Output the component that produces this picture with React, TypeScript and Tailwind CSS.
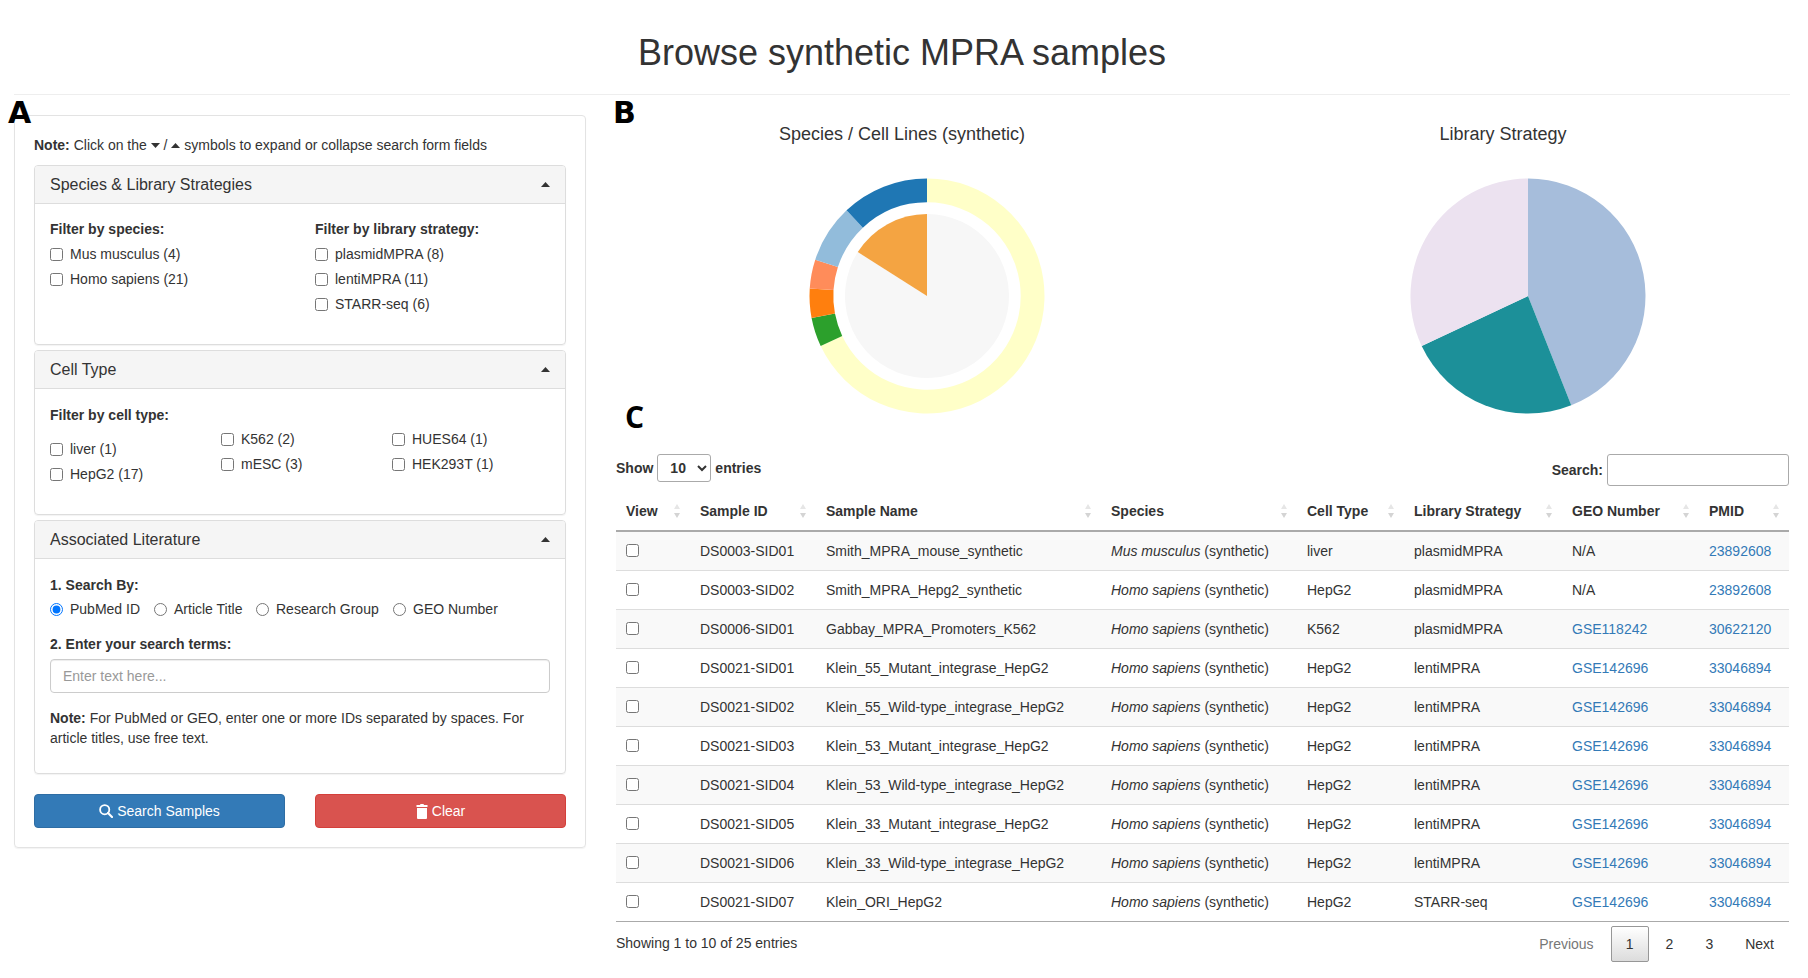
import React from 'react';

const rows = [
  ['DS0003-SID01', 'Smith_MPRA_mouse_synthetic', 'Mus musculus', 'liver', 'plasmidMPRA', 'N/A', '23892608'],
  ['DS0003-SID02', 'Smith_MPRA_Hepg2_synthetic', 'Homo sapiens', 'HepG2', 'plasmidMPRA', 'N/A', '23892608'],
  ['DS0006-SID01', 'Gabbay_MPRA_Promoters_K562', 'Homo sapiens', 'K562', 'plasmidMPRA', 'GSE118242', '30622120'],
  ['DS0021-SID01', 'Klein_55_Mutant_integrase_HepG2', 'Homo sapiens', 'HepG2', 'lentiMPRA', 'GSE142696', '33046894'],
  ['DS0021-SID02', 'Klein_55_Wild-type_integrase_HepG2', 'Homo sapiens', 'HepG2', 'lentiMPRA', 'GSE142696', '33046894'],
  ['DS0021-SID03', 'Klein_53_Mutant_integrase_HepG2', 'Homo sapiens', 'HepG2', 'lentiMPRA', 'GSE142696', '33046894'],
  ['DS0021-SID04', 'Klein_53_Wild-type_integrase_HepG2', 'Homo sapiens', 'HepG2', 'lentiMPRA', 'GSE142696', '33046894'],
  ['DS0021-SID05', 'Klein_33_Mutant_integrase_HepG2', 'Homo sapiens', 'HepG2', 'lentiMPRA', 'GSE142696', '33046894'],
  ['DS0021-SID06', 'Klein_33_Wild-type_integrase_HepG2', 'Homo sapiens', 'HepG2', 'lentiMPRA', 'GSE142696', '33046894'],
  ['DS0021-SID07', 'Klein_ORI_HepG2', 'Homo sapiens', 'HepG2', 'STARR-seq', 'GSE142696', '33046894'],
];

const columns = [
  { label: 'View', width: 'w-[74px]' },
  { label: 'Sample ID', width: 'w-[126px]' },
  { label: 'Sample Name', width: 'w-[285px]' },
  { label: 'Species', width: 'w-[196px]' },
  { label: 'Cell Type', width: 'w-[107px]' },
  { label: 'Library Strategy', width: 'w-[158px]' },
  { label: 'GEO Number', width: 'w-[137px]' },
  { label: 'PMID', width: 'w-[90px]' },
];

// angle 0 = top, clockwise, in degrees
const point = (r: number, deg: number) => {
  const a = (deg * Math.PI) / 180;
  return `${(r * Math.sin(a)).toFixed(2)} ${(-r * Math.cos(a)).toFixed(2)}`;
};

const slice = (r0: number, r1: number, from: number, to: number) => {
  const large = to - from > 180 ? 1 : 0;
  if (r0 === 0) {
    return `M0 0L${point(r1, from)}A${r1} ${r1} 0 ${large} 1 ${point(r1, to)}Z`;
  }
  return `M${point(r0, from)}L${point(r1, from)}A${r1} ${r1} 0 ${large} 1 ${point(r1, to)}L${point(r0, to)}A${r0} ${r0} 0 ${large} 0 ${point(r0, from)}Z`;
};

type Seg = { n: number; color: string };

const Ring = ({ r0, r1, segs }: { r0: number; r1: number; segs: Seg[] }) => {
  let at = 0;
  return (
    <>
      {segs.map((s, i) => {
        const from = at;
        at += (s.n / 25) * 360;
        return <path key={i} d={slice(r0, r1, from, at)} fill={s.color} />;
      })}
    </>
  );
};

const Chart = ({ title, children }: { title: string; children: React.ReactNode }) => (
  <div className="w-[572px]">
    <div className="h-[36px] pt-[1px] flex items-center justify-center text-[18px] text-[#333]">{title}</div>
    <svg className="mt-[25px] block" width="572" height="240" viewBox="-311 -120 572 240">
      {children}
    </svg>
  </div>
);

const Caret = ({ down }: { down?: boolean }) => (
  <svg width="9" height="5" viewBox="0 0 9 5" className="inline-block">
    <path d={down ? 'M0 0H9L4.5 5Z' : 'M4.5 0L9 5H0Z'} fill="#333" />
  </svg>
);

const Check = ({ label }: { label: string }) => (
  <label className="flex h-[25px] items-center gap-[7px] text-[#333]">
    <input type="checkbox" className="w-[13px] h-[13px] mt-[2px]" />
    {label}
  </label>
);

const Radio = ({ label, checked }: { label: string; checked?: boolean }) => (
  <label className="flex items-center gap-[7px]">
    <input type="radio" name="searchBy" defaultChecked={checked} className="w-[13px] h-[13px] mt-[1px]" />
    {label}
  </label>
);

const Accordion = ({ title, height, children }: { title: string; height: string; children: React.ReactNode }) => (
  <div className={`${height} border border-[#ddd] rounded-[4px] shadow-[0_1px_1px_rgba(0,0,0,0.05)] overflow-hidden`}>
    <div className="h-[38px] bg-[#f5f5f5] border-b border-[#ddd] flex items-center justify-between px-[15px] text-[16px]">
      <span>{title}</span>
      <Caret />
    </div>
    <div className="px-[15px] pt-[15px]">{children}</div>
  </div>
);

const SortIcon = () => (
  <svg width="8" height="16" viewBox="0 0 8 16" className="absolute right-[9px] top-[2px]">
    <path d="M4 1L7 6H1Z" fill="#e6e6e6" />
    <path d="M4 15L1 10H7Z" fill="#d4d4d4" />
  </svg>
);

const Tag = ({ children, className }: { children: string; className: string }) => (
  <div className={`absolute font-bold text-[30px] leading-none text-black ${className}`}>
    {children}
  </div>
);

export default function App() {
  return (
    <div className="relative w-[1808px] h-[978px] bg-white overflow-hidden font-['Liberation_Sans',Arial,sans-serif] text-[14px] leading-[20px] text-[#333]">
      <Tag className="left-[8px] top-[98px] font-['DejaVu_Sans',sans-serif]">A</Tag>
      <Tag className="left-[613px] top-[98px] font-['DejaVu_Sans',sans-serif]">B</Tag>
      <Tag className="left-[625px] top-[402px] font-['Open_Sans',sans-serif]">C</Tag>

      <div className="mx-[14px] w-[1776px] h-[95px] border-b border-[#eee] flex items-center justify-center">
        <h1 className="text-[36px] leading-[40px] pt-[11px]">Browse synthetic MPRA samples</h1>
      </div>

      <div className="flex items-start pt-[20px] pl-[14px]">
        {/* search form */}
        <div className="w-[572px] border border-[#e3e3e3] rounded-[4px] px-[19px] pt-[19px] pb-[19px] shadow-[0_1px_1px_rgba(0,0,0,0.05)]">
          <div className="flex items-center h-[20px] mb-[10px] whitespace-pre">
            <b>Note:</b> Click on the <Caret down /> / <Caret /> symbols to expand or collapse search form fields
          </div>

          <Accordion title="Species &amp; Library Strategies" height="h-[180px]">
            <div className="flex">
              <div className="w-[265px]">
                <div className="font-bold mb-[2px]">Filter by species:</div>
                <Check label="Mus musculus (4)" />
                <Check label="Homo sapiens (21)" />
              </div>
              <div>
                <div className="font-bold mb-[2px]">Filter by library strategy:</div>
                <Check label="plasmidMPRA (8)" />
                <Check label="lentiMPRA (11)" />
                <Check label="STARR-seq (6)" />
              </div>
            </div>
          </Accordion>

          <div className="mt-[5px]">
            <Accordion title="Cell Type" height="h-[165px]">
              <div className="font-bold pt-[1px]">Filter by cell type:</div>
              <div className="grid grid-cols-[171px_171px_1fr] mt-[1px]">
                <div className="mt-[10px]">
                  <Check label="liver (1)" />
                  <Check label="HepG2 (17)" />
                </div>
                <div>
                  <Check label="K562 (2)" />
                  <Check label="mESC (3)" />
                </div>
                <div>
                  <Check label="HUES64 (1)" />
                  <Check label="HEK293T (1)" />
                </div>
              </div>
            </Accordion>
          </div>

          <div className="mt-[5px]">
            <Accordion title="Associated Literature" height="h-[254px]">
              <div className="font-bold pt-[1px]">1. Search By:</div>
              <div className="flex h-[28px] items-center">
                <div className="w-[104px]"><Radio label="PubMed ID" checked /></div>
                <div className="w-[102px]"><Radio label="Article Title" /></div>
                <div className="w-[137px]"><Radio label="Research Group" /></div>
                <Radio label="GEO Number" />
              </div>
              <div className="font-bold mt-[11px]">2. Enter your search terms:</div>
              <input
                placeholder="Enter text here..."
                className="block w-full h-[34px] mt-[5px] px-[12px] border border-[#ccc] rounded-[4px] shadow-[inset_0_1px_1px_rgba(0,0,0,0.075)] placeholder:text-[#999]"
              />
              <p className="mt-[15px]">
                <b>Note:</b> For PubMed or GEO, enter one or more IDs separated by spaces. For article titles, use free text.
              </p>
            </Accordion>
          </div>

          <div className="flex justify-between mt-[20px]">
            <button className="w-[251px] h-[34px] bg-[#337ab7] border border-[#2e6da4] rounded-[4px] text-white flex items-center justify-center gap-[4px]">
              <svg width="14" height="14" viewBox="0 0 14 14" fill="none" stroke="white">
                <circle cx="5.7" cy="5.7" r="4.6" strokeWidth="1.8" />
                <path d="M9 9L13 13" strokeWidth="2.2" strokeLinecap="round" />
              </svg>
              Search Samples
            </button>
            <button className="w-[251px] h-[34px] bg-[#d9534f] border border-[#d43f3a] rounded-[4px] text-white flex items-center justify-center gap-[4px]">
              <svg width="12" height="15" viewBox="0 0 12 15" fill="white">
                <path d="M4.5 0H7.5L8 1H11.5V3H.5V1H4Z" />
                <path d="M1 4H11V14Q11 15 10 15H2Q1 15 1 14Z" />
              </svg>
              Clear
            </button>
          </div>
        </div>

        {/* charts and table */}
        <div className="ml-[30px] w-[1173px]">
          <div className="flex gap-[29px]">
            <Chart title="Species / Cell Lines (synthetic)">
              <Ring
                r0={93.7}
                r1={117.5}
                segs={[
                  { n: 17, color: '#ffffc8' },
                  { n: 1, color: '#2ca02c' },
                  { n: 1, color: '#ff7f0e' },
                  { n: 1, color: '#ff8c5a' },
                  { n: 2, color: '#92bcdb' },
                  { n: 3, color: '#1f77b4' },
                ]}
              />
              <Ring
                r0={0}
                r1={82}
                segs={[
                  { n: 21, color: '#f7f7f7' },
                  { n: 4, color: '#f4a442' },
                ]}
              />
            </Chart>
            <Chart title="Library Strategy">
              <Ring
                r0={0}
                r1={117.5}
                segs={[
                  { n: 11, color: '#a6bddb' },
                  { n: 6, color: '#1c9099' },
                  { n: 8, color: '#ece2f0' },
                ]}
              />
            </Chart>
          </div>

          <div className="mt-[38px] flex justify-between items-start h-[32px]">
            <div className="flex items-center h-[28px] font-bold gap-[4px]">
              Show
              <select className="w-[54px] h-[28px] border border-[#aaa] rounded-[3px] pl-[8px] font-bold bg-white">
                <option>10</option>
              </select>
              entries
            </div>
            <div className="flex items-center h-[32px] font-bold gap-[4px]">
              Search:
              <input className="w-[182px] h-[32px] border border-[#aaa] rounded-[3px]" />
            </div>
          </div>

          <table className="w-[1173px] table-fixed border-collapse">
            <thead>
              <tr className="border-b-2 border-[#aaa]">
                {columns.map((c) => (
                  <th key={c.label} className={`${c.width} h-[45px] align-bottom text-left font-bold px-[10px] pb-[9px]`}>
                    <div className="relative -mr-[10px]">
                      {c.label}
                      <SortIcon />
                    </div>
                  </th>
                ))}
              </tr>
            </thead>
            <tbody>
              {rows.map((r, i) => (
                <tr key={r[0]} className={`h-[39px] border-b ${i === 9 ? 'border-[#aaa]' : 'border-[#ddd]'} ${i % 2 === 0 ? 'bg-[#f9f9f9]' : 'bg-white'}`}>
                  <td className="px-[10px]">
                    <input type="checkbox" className="block w-[13px] h-[13px]" />
                  </td>
                  <td className="px-[10px]">{r[0]}</td>
                  <td className="px-[10px]">{r[1]}</td>
                  <td className="px-[10px]"><i>{r[2]}</i> (synthetic)</td>
                  <td className="px-[10px]">{r[3]}</td>
                  <td className="px-[10px]">{r[4]}</td>
                  <td className={`px-[10px] ${r[5] === 'N/A' ? '' : 'text-[#337ab7]'}`}>{r[5]}</td>
                  <td className="px-[10px] text-[#337ab7]">{r[6]}</td>
                </tr>
              ))}
            </tbody>
          </table>

          <div className="flex justify-between items-start">
            <div className="mt-[11px]">Showing 1 to 10 of 25 entries</div>
            <div className="flex items-center mt-[4px] pr-[2px] h-[36px]">
              <span className="px-[13px] text-[#777] mr-[4px]">Previous</span>
              <span className="w-[38px] h-[36px] flex items-center justify-center border border-[#979797] rounded-[2px] bg-gradient-to-b from-white to-[#dcdcdc] mr-[4px]">1</span>
              <span className="px-[13px] mr-[6px]">2</span>
              <span className="px-[13px] mr-[6px]">3</span>
              <span className="px-[13px]">Next</span>
            </div>
          </div>
        </div>
      </div>
    </div>
  );
}
